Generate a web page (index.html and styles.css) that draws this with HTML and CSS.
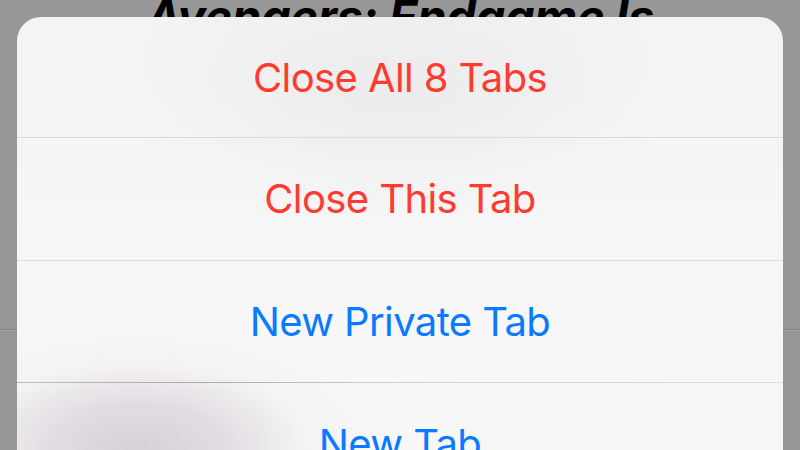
FILE: index.html
```html
<!DOCTYPE html>
<html>
<head>
<meta charset="utf-8">
<link rel="stylesheet" href="styles.css">
</head>
<body>
<div class="page">
  <h1 class="headline">Avengers: Endgame Is</h1>
  <div class="divider"></div>
  <div class="sheet">
    <div class="glow"></div>
    <button class="action destructive">Close All 8 Tabs</button>
    <button class="action destructive">Close This Tab</button>
    <button class="action tinted">New Private Tab</button>
    <button class="action">New Tab</button>
  </div>
</div>
</body>
</html>
```
FILE: styles.css
```css
html, body {
  margin: 0;
  padding: 0;
  width: 800px;
  height: 450px;
  overflow: hidden;
  background: #979797;
}
.page {
  position: relative;
  width: 800px;
  height: 450px;
  overflow: hidden;
  font-family: Inter, "Liberation Sans", sans-serif;
}
.headline {
  margin: 0;
  text-align: center;
  font-size: 47px;
  font-weight: 700;
  font-style: italic;
  line-height: 34px;
  height: 329px;
  color: #000;
  letter-spacing: -0.3px;
  font-family: Inter, "Liberation Sans", sans-serif;
}
.divider {
  height: 1px;
  background: #868686;
  border-bottom: 1px solid #a2a2a2;
}
.sheet {
  position: absolute;
  left: 17px;
  top: 17px;
  width: 766px;
  height: 500px;
  border-radius: 24px 24px 0 0;
  overflow: hidden;
  background:
    radial-gradient(ellipse 280px 130px at 380px 70px, #ececec 0%, rgba(236,236,236,0) 100%),
    linear-gradient(180deg, #f3f3f3 0px, #f6f6f6 200px, #f7f7f7 300px);
  display: flex;
  flex-direction: column;
}
.glow {
  position: absolute;
  left: -120px;
  top: 310px;
  width: 480px;
  height: 240px;
  background: radial-gradient(ellipse 50% 50% at center, rgba(214,206,215,0.95) 0%, rgba(218,211,219,0.75) 35%, rgba(236,233,237,0.3) 70%, rgba(247,247,247,0) 100%);
  pointer-events: none;
}
.action {
  position: relative;
  flex: 0 0 auto;
  height: 122.5px;
  border: 0;
  border-bottom: 1px solid #d9d9d9;
  background: transparent;
  font-family: Inter, "Liberation Sans", sans-serif;
  font-size: 40px;
  letter-spacing: -0.6px;
  font-weight: 400;
  color: #0a7aff;
  text-align: center;
  padding: 0;
  margin: 0;
}
.action:first-of-type {
  height: 121px;
}
.tinted {
  border-bottom: 1px solid transparent;
  border-image: linear-gradient(90deg, #c4b8c0 0%, #b4a4ae 25%, #cfc8cd 45%, #dadada 60%, #dcdcdc 100%) 1;
}
.destructive {
  color: #ff3b30;
}
```
